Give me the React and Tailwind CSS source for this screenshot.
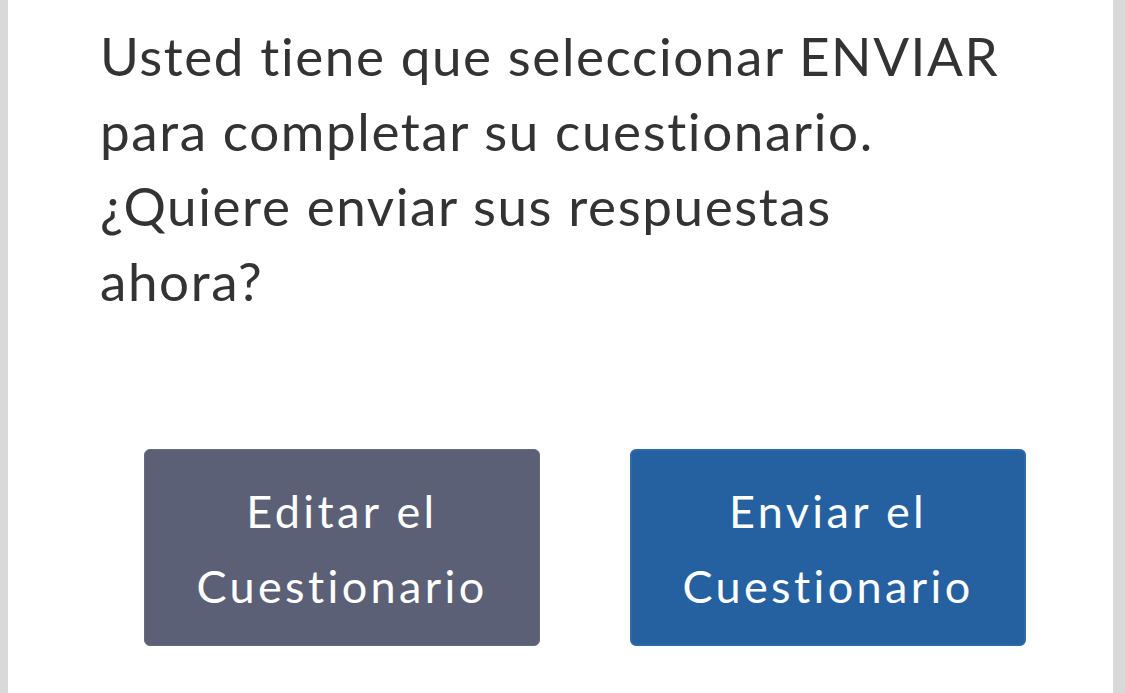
import React from 'react';

const font = { fontFamily: '"Lato", "Noto Sans", sans-serif' };

export default function App() {
    return (
        <div className="flex h-[693px] w-full bg-[#d9d9d9]" style={font}>
            <div className="ml-[8px] mr-[12px] flex-1 bg-white pl-[92px] pt-[18px]">
                {/* Message */}
                <p className="w-[910px] text-[53px] leading-[75px] tracking-[0.03em] text-[#333333]">
                    Usted tiene que seleccionar ENVIAR para completar su cuestionario. ¿Quiere enviar sus respuestas ahora?
                </p>

                {/* Actions */}
                <div className="mt-[131px] flex gap-[90px] pl-[44px]">
                    <button className="flex h-[197px] w-[396px] items-center justify-center rounded-[6px] border border-[#676b7f] bg-[#5c6076] pt-[3px] text-[45px] leading-[75px] tracking-[0.075em] text-white">
                        <span className="block">
                            Editar el
                            <br />
                            Cuestionario
                        </span>
                    </button>
                    <button className="flex h-[197px] w-[396px] items-center justify-center rounded-[6px] border-2 border-[#2f6aa9] bg-[#2561a0] pt-[3px] text-[45px] leading-[75px] tracking-[0.075em] text-white">
                        <span className="block">
                            Enviar el
                            <br />
                            Cuestionario
                        </span>
                    </button>
                </div>
            </div>
        </div>
    );
}
